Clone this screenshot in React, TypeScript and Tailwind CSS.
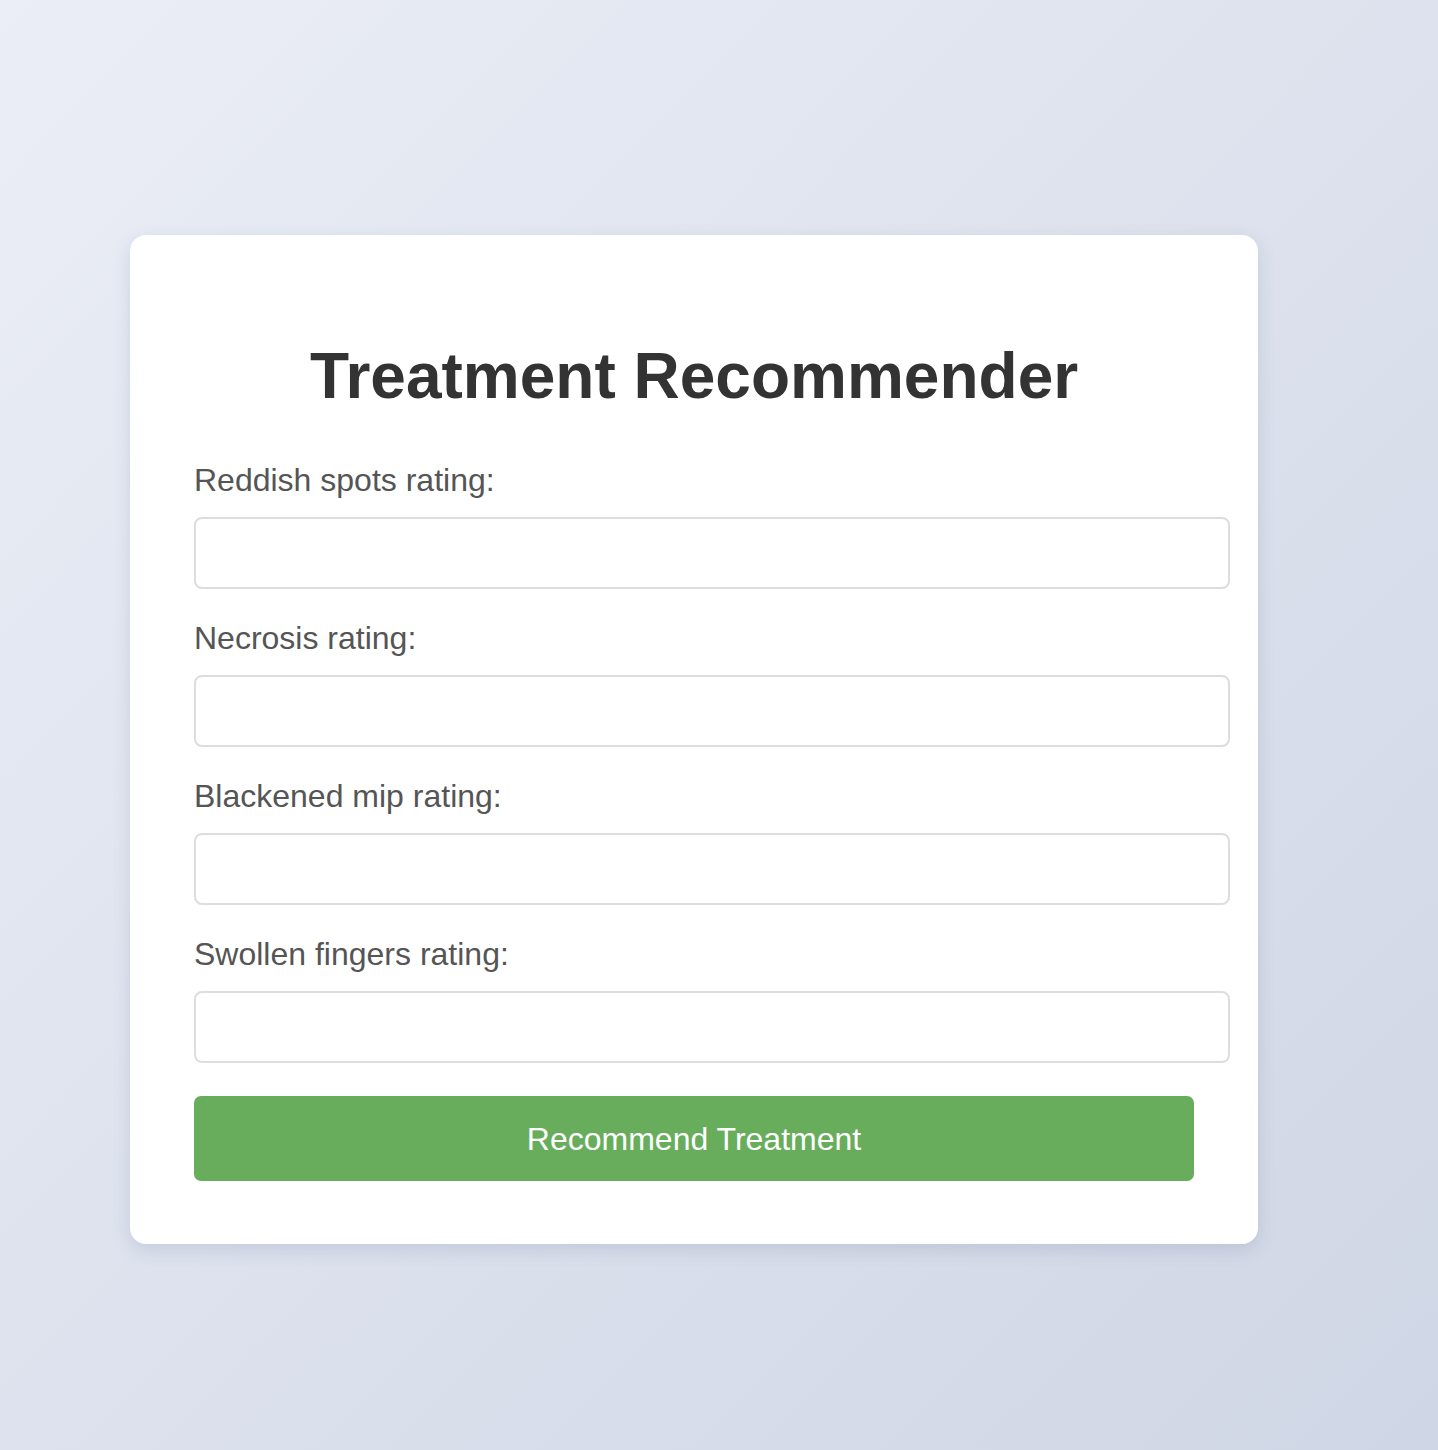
import React from "react";

const fields = [
  "Reddish spots rating:",
  "Necrosis rating:",
  "Blackened mip rating:",
  "Swollen fingers rating:",
];

export default function App() {
  return (
    <div
      className="min-h-[1450px] w-full bg-linear-to-br from-[#ebeef6] to-[#cfd6e5] pt-[235px] pl-[130px]"
      style={{ fontFamily: '"Liberation Sans", Arial, Helvetica, sans-serif' }}
    >
      <div className="w-[1128px] rounded-[16px] bg-white px-16 pt-16 pb-[63px] shadow-[0_6px_18px_rgba(90,105,140,0.18)]">
        <h1 className="mt-[41px] mb-[50px] text-center text-[64px] leading-[72px] font-bold text-[#333333]">
          Treatment Recommender
        </h1>
        {fields.map((f) => (
          <div key={f} className="mb-[31px]">
            <label className="mb-[19px] block text-[32px] leading-[36px] text-[#555555]">
              {f}
            </label>
            <input
              type="text"
              className="block h-[72px] w-[1036px] rounded-[8px] border-2 border-[#dddddd] bg-white px-4 text-[28px] outline-none"
            />
          </div>
        ))}
        <button className="mt-[33px] flex h-[85px] w-full items-center justify-center rounded-[7px] bg-[#68ad5c] text-[32px] text-white">
          Recommend Treatment
        </button>
      </div>
    </div>
  );
}
